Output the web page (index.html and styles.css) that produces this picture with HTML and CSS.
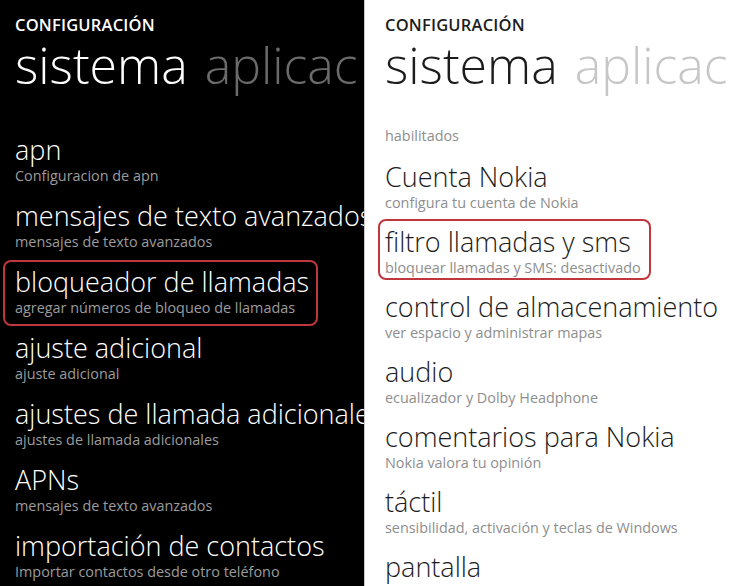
FILE: index.html
```html
<!DOCTYPE html>
<html lang="es">
<head>
  <meta charset="UTF-8" />
  <meta name="viewport" content="width=device-width, initial-scale=1.0" />
  <title>Configuración</title>
  <link rel="stylesheet" href="styles.css">
</head>
<body>

  <div class="screens">

    <section class="panel dark">
      <div class="app-title">Configuración</div>
      <div class="pivot">
        <span class="pivot-current">sistema</span>
        <span class="pivot-next">aplicac</span>
      </div>
      <ul class="list">
        <li class="item">
          <div class="item-title">apn</div>
          <div class="item-sub">Configuracion de apn</div>
        </li>
        <li class="item">
          <div class="item-title">mensajes de texto avanzados</div>
          <div class="item-sub">mensajes de texto avanzados</div>
        </li>
        <li class="item marked marked-left">
          <div class="item-title">bloqueador de llamadas</div>
          <div class="item-sub">agregar números de bloqueo de llamadas</div>
        </li>
        <li class="item">
          <div class="item-title">ajuste adicional</div>
          <div class="item-sub">ajuste adicional</div>
        </li>
        <li class="item">
          <div class="item-title">ajustes de llamada adicionales</div>
          <div class="item-sub">ajustes de llamada adicionales</div>
        </li>
        <li class="item">
          <div class="item-title">APNs</div>
          <div class="item-sub">mensajes de texto avanzados</div>
        </li>
        <li class="item">
          <div class="item-title">importación de contactos</div>
          <div class="item-sub">Importar contactos desde otro teléfono</div>
        </li>
      </ul>
    </section>

    <section class="panel light">
      <div class="app-title">Configuración</div>
      <div class="pivot">
        <span class="pivot-current">sistema</span>
        <span class="pivot-next">aplicac</span>
      </div>
      <ul class="list">
        <li class="group-label">habilitados</li>
        <li class="item">
          <div class="item-title">Cuenta Nokia</div>
          <div class="item-sub">configura tu cuenta de Nokia</div>
        </li>
        <li class="item marked marked-right">
          <div class="item-title">filtro llamadas y sms</div>
          <div class="item-sub">bloquear llamadas y SMS: desactivado</div>
        </li>
        <li class="item">
          <div class="item-title">control de almacenamiento</div>
          <div class="item-sub">ver espacio y administrar mapas</div>
        </li>
        <li class="item">
          <div class="item-title">audio</div>
          <div class="item-sub">ecualizador y Dolby Headphone</div>
        </li>
        <li class="item">
          <div class="item-title">comentarios para Nokia</div>
          <div class="item-sub">Nokia valora tu opinión</div>
        </li>
        <li class="item">
          <div class="item-title">táctil</div>
          <div class="item-sub">sensibilidad, activación y teclas de Windows</div>
        </li>
        <li class="item">
          <div class="item-title">pantalla</div>
        </li>
      </ul>
    </section>

  </div>

</body>
</html>
```

FILE: styles.css
```css
body {
  margin: 0;
  font-family: 'Open Sans', 'Noto Sans', sans-serif;
  background-color: #ffffff;
}

.screens {
  display: flex;
  width: 750px;
  height: 586px;
  overflow: hidden;
}

.panel {
  position: relative;
  height: 586px;
  overflow: hidden;
  white-space: nowrap;
  padding-top: 13px;
  box-sizing: border-box;
}

.dark {
  width: 364px;
  padding-left: 15px;
  background-color: #000000;
  color: #ffffff;
}

.light {
  flex: 1;
  padding-left: 20px;
  background-color: #ffffff;
  color: #1c1c1c;
  border-left: 1px solid #c8c8c8;
}

.app-title {
  font-size: 16.5px;
  line-height: 24px;
  font-weight: 600;
  letter-spacing: 0.2px;
  text-transform: uppercase;
}

.pivot {
  margin-top: 0;
  font-size: 50px;
  line-height: 56px;
  font-weight: 300;
}

.pivot-next {
  margin-left: 4px;
}

.dark .pivot-next {
  color: #6b6b6b;
}

.light .pivot-next {
  color: #c6c6c6;
}

.list {
  list-style: none;
  margin: 0;
  padding: 0;
}

.dark .list {
  margin-top: 41px;
}

.light .list {
  margin-top: 33px;
}

.group-label {
  font-size: 14.4px;
  line-height: 20px;
  color: #8e8e8e;
  margin-bottom: 15px;
}

.item {
  position: relative;
  height: 66px;
}

.light .item {
  height: 65px;
}

.item-title {
  font-size: 27px;
  line-height: 32px;
  font-weight: 300;
}

.item-sub {
  font-size: 14.4px;
  line-height: 20px;
}

.dark .item-sub {
  color: #9c9c9c;
}

.light .item-sub {
  color: #8e8e8e;
}

/* red annotation boxes drawn over the screenshot */
.marked::after {
  content: "";
  position: absolute;
  border: 2px solid #bf363d;
  border-radius: 8px;
  box-sizing: border-box;
}

.marked-left::after {
  left: -12px;
  top: -6px;
  width: 315px;
  height: 66px;
}

.marked-right::after {
  left: -7px;
  top: -7px;
  width: 273px;
  height: 61px;
}
```
